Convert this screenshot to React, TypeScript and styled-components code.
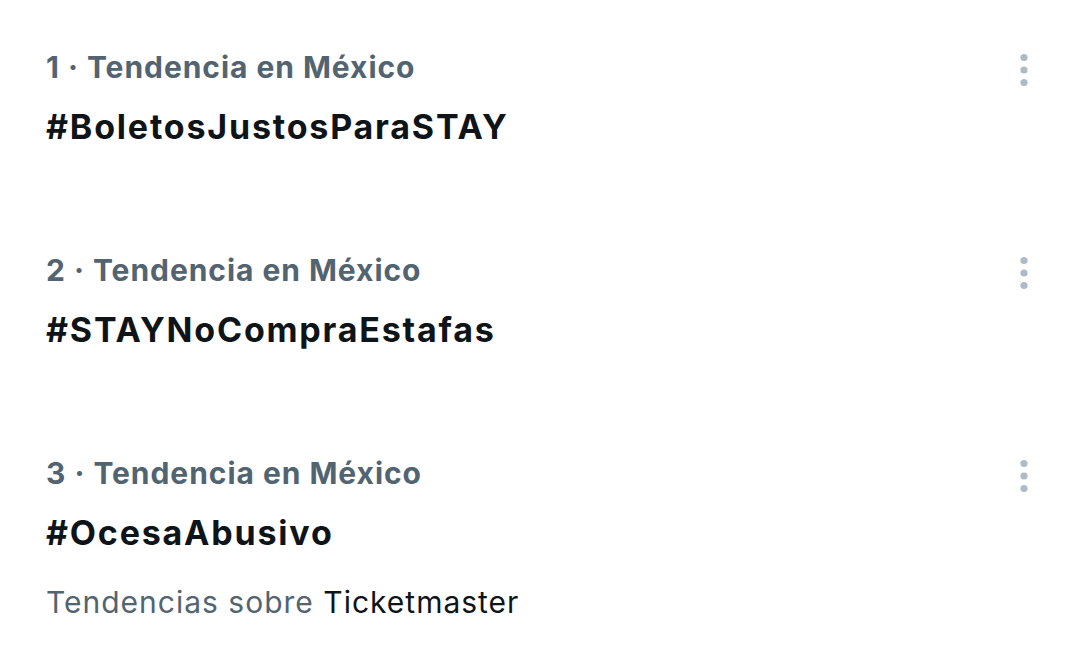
import React, { ReactElement } from 'react'
import styled, { createGlobalStyle } from 'styled-components'

const GlobalStyle = createGlobalStyle`
  html, body {
    margin: 0;
    padding: 0;
    background: #ffffff;
  }
  body {
    font-family: Inter, "Noto Sans", "Liberation Sans", sans-serif;
  }
`

type Trend = {
  rank: number
  place: string
  name: string
  about?: string
}

const TRENDS: Trend[] = [
  { rank: 1, place: 'México', name: '#BoletosJustosParaSTAY' },
  { rank: 2, place: 'México', name: '#STAYNoCompraEstafas' },
  { rank: 3, place: 'México', name: '#OcesaAbusivo', about: 'Ticketmaster' },
]

const MoreIcon = (): ReactElement => (
  <svg width="10" height="34" viewBox="0 0 10 34" fill="#aebbc5">
    <circle cx="5" cy="4.5" r="3.6" />
    <circle cx="5" cy="17" r="3.6" />
    <circle cx="5" cy="29.5" r="3.6" />
  </svg>
)

const App = (): ReactElement => {
  return (
    <>
      <GlobalStyle />
      <List>
        {TRENDS.map((t, i) => (
          <Item key={t.rank} last={i === TRENDS.length - 1}>
            <Body>
              <Context>
                {t.rank} · Tendencia en {t.place}
              </Context>
              <Name>{t.name}</Name>
              {t.about && (
                <About>
                  Tendencias sobre <strong>{t.about}</strong>
                </About>
              )}
            </Body>
            <More aria-label="Más opciones">
              <MoreIcon />
            </More>
          </Item>
        ))}
      </List>
    </>
  )
}

export default App

const List = styled.div`
  display: flex;
  flex-direction: column;
  width: 1080px;
  height: 664px;
  box-sizing: border-box;
  padding-top: 47px;
  overflow: hidden;
`

type ItemProps = {
  last?: boolean
}

const Item = styled.div<ItemProps>`
  display: flex;
  flex-direction: row;
  align-items: flex-start;
  padding: 0 36px 0 46px;
  height: ${(props) => (props.last ? 'auto' : '203px')};
  box-sizing: border-box;
`

const Body = styled.div`
  display: flex;
  flex-direction: column;
  flex: 1;
`

const Context = styled.div`
  font-size: 30px;
  line-height: 40px;
  font-weight: 700;
  color: #536471;
  letter-spacing: 0.95px;
`

const Name = styled.div`
  margin-top: 18px;
  font-size: 34px;
  line-height: 44px;
  font-weight: 700;
  color: #0f1419;
  letter-spacing: 1.8px;
`

const About = styled.div`
  margin-top: 27px;
  font-size: 30px;
  line-height: 40px;
  font-weight: 400;
  color: #536471;
  letter-spacing: 1px;

  strong {
    font-weight: 400;
    color: #0f1419;
  }
`

const More = styled.button`
  display: flex;
  align-items: center;
  justify-content: center;
  width: 40px;
  height: 40px;
  margin-top: 3px;
  padding: 0;
  border: none;
  background: transparent;
  cursor: pointer;
`
